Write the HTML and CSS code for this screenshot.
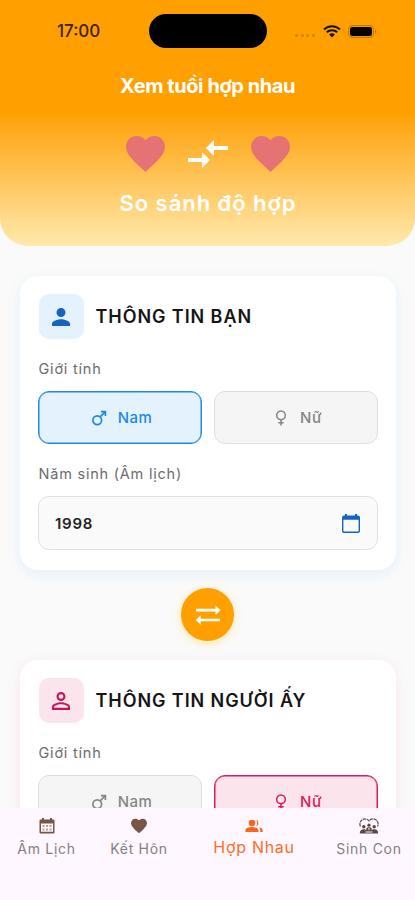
FILE: index.html
```html
<!DOCTYPE html>
<html lang="vi">
<head>
<meta charset="utf-8">
<meta name="viewport" content="width=device-width, initial-scale=1">
<title>Xem tuổi hợp nhau</title>
<link rel="stylesheet" href="styles.css">
</head>
<body>
<svg class="defs" width="0" height="0" aria-hidden="true">
  <symbol id="heart" viewBox="2 3 20 18.35"><path d="M12 21.35l-1.45-1.32C5.4 15.36 2 12.28 2 8.5 2 5.42 4.42 3 7.5 3c1.74 0 3.41.81 4.5 2.09C13.09 3.81 14.76 3 16.5 3 19.58 3 22 5.42 22 8.5c0 3.78-3.4 6.86-8.55 11.54L12 21.35z"/></symbol>
  <symbol id="male" viewBox="0 0 18 18"><path d="M10.6 7.4L16 2M11.2 1.800h5v5" fill="none" stroke="currentColor" stroke-width="1.900"/><circle cx="7" cy="11.500" r="4.900" fill="none" stroke="currentColor" stroke-width="1.900"/></symbol>
  <symbol id="female" viewBox="0 0 18 18"><circle cx="9" cy="6" r="4.900" fill="none" stroke="currentColor" stroke-width="1.700"/><path d="M9 10.900v6.600M6 14.300h6" fill="none" stroke="currentColor" stroke-width="1.700"/></symbol>
</svg>
<main class="screen">
  <header class="header">
    <div class="status">
      <span class="time">17:00</span>
      <span class="island"></span>
      <div class="signals">
        <span class="cell"><i></i><i></i><i></i><i></i></span>
        <svg class="wifi" viewBox="0 0 18 13"><path d="M1 4.5a11.5 11.5 0 0 1 16 0M3.8 7.3a7.4 7.4 0 0 1 10.4 0" fill="none" stroke="#171000" stroke-width="2"/><path d="M9 12.5L6.1 9.6a4.1 4.1 0 0 1 5.8 0z" fill="#171000"/></svg>
        <svg class="battery" viewBox="0 0 29 13"><rect x=".6" y=".6" width="24.8" height="11.8" rx="3.6" fill="none" stroke="#c07b08" stroke-width="1.1"/><rect x="2" y="2" width="22" height="9" rx="2.3" fill="#080500"/><path d="M27 4.2q2 2.2 0 4.4z" fill="#a96c08"/></svg>
      </div>
    </div>
    <h1 class="title">Xem tuổi hợp nhau</h1>
    <div class="hearts">
      <svg class="heart"><use href="#heart"/></svg>
      <svg class="compare" viewBox="2 5 20 14"><path d="M9.01 14H2v2h7.01v3L13 15l-3.99-4v3zm5.98-1v-3H22V8h-7.01V5L11 9l3.99 4z"/></svg>
      <svg class="heart"><use href="#heart"/></svg>
    </div>
    <p class="subtitle">So sánh độ hợp</p>
  </header>

  <section class="card card-self">
    <div class="card-head">
      <span class="avatar"><svg viewBox="4 4 16 16"><path d="M12 12c2.21 0 4-1.79 4-4s-1.79-4-4-4-4 1.79-4 4 1.79 4 4 4zm0 2c-2.67 0-8 1.34-8 4v2h16v-2c0-2.66-5.33-4-8-4z"/></svg></span>
      <h2>THÔNG TIN BẠN</h2>
    </div>
    <p class="label gender-label">Giới tính</p>
    <div class="options">
      <button class="option selected"><svg><use href="#male"/></svg><span>Nam</span></button>
      <button class="option"><svg><use href="#female"/></svg><span>Nữ</span></button>
    </div>
    <p class="label year-label">Năm sinh (Âm lịch)</p>
    <div class="field">
      <span>1998</span>
      <svg viewBox="0 0 18 19"><path d="M3 0h2v1.500h8V0h2v1.500h1a2 2 0 0 1 2 2V17a2 2 0 0 1-2 2H2a2 2 0 0 1-2-2V3.500a2 2 0 0 1 2-2h1zM1.400 5.700V16.800c0 .5.3.8.8.8h13.600c.5 0 .8-.3.8-.8V5.700z" fill-rule="evenodd"/></svg>
    </div>
  </section>

  <button class="swap" aria-label="Đổi"><svg viewBox="0 0 26 20"><path d="M1 5.200h20M5 15h20" stroke="#fff" stroke-width="2.700"/><path d="M20.500.4L25.500 5.200l-5 4.800zM5.700 10.200L.7 15l5 4.800z" fill="#fff"/></svg></button>

  <section class="card card-partner">
    <div class="card-head">
      <span class="avatar"><svg viewBox="4 4 16 16"><path d="M12 5.9a2.1 2.1 0 1 1 0 4.2 2.1 2.1 0 0 1 0-4.2m0 9c2.97 0 6.1 1.46 6.1 2.1v1.1H5.9V17c0-.64 3.13-2.1 6.1-2.1M12 4C9.79 4 8 5.79 8 8s1.79 4 4 4 4-1.79 4-4-1.79-4-4-4zm0 9c-2.67 0-8 1.34-8 4v3h16v-3c0-2.66-5.33-4-8-4z"/></svg></span>
      <h2>THÔNG TIN NGƯỜI ẤY</h2>
    </div>
    <p class="label gender-label">Giới tính</p>
    <div class="options">
      <button class="option"><svg><use href="#male"/></svg><span>Nam</span></button>
      <button class="option selected"><svg><use href="#female"/></svg><span>Nữ</span></button>
    </div>
  </section>

  <nav class="tabs">
    <a class="tab"><svg viewBox="0 0 16 16"><path d="M3 0h2v1.5h6V0h2v1.5h1.2c.8 0 1.3.5 1.3 1.3v11.4c0 .8-.5 1.3-1.3 1.3H1.8c-.8 0-1.3-.5-1.3-1.3V2.8c0-.8.5-1.3 1.3-1.3H3zM2 5.5v8.3h12V5.5z" fill-rule="evenodd"/><path d="M3.5 7h2v2h-2zM7 7h2v2H7zM10.5 7h2v2h-2zM3.5 10.5h2v2h-2zM7 10.5h2v2H7zM10.5 10.5h2v2h-2z" opacity=".55"/></svg><span>Âm Lịch</span></a>
    <a class="tab"><svg><use href="#heart"/></svg><span>Kết Hôn</span></a>
    <a class="tab active"><svg viewBox="0 0 18 14"><circle cx="7" cy="4" r="3.3"/><path d="M.5 13v-1.8C.5 9 3.800 8 7 8s6.500 1 6.500 3.200V13zM11 .8a3.300 3.300 0 0 1 0 6.400 5.300 5.300 0 0 0 0-6.400zM14 8.300c2 .4 3.700 1.300 3.700 2.900V13h-2.500v-1.800c0-1.200-.5-2.200-1.200-2.900z"/></svg><span>Hợp Nhau</span></a>
    <a class="tab family"><svg viewBox="0 0 20 16"><path d="M1.400 8.500C-.4 4 3 .8 6 .9c1.800 0 3.100.9 4 2 .9-1.100 2.200-2 4-2 3-.1 6.400 3.100 4.600 7.600" fill="none" stroke="currentColor" stroke-width="1.200" stroke-dasharray="3.500 .6"/><circle cx="4.800" cy="8.700" r="1.700"/><circle cx="15.200" cy="8.700" r="1.700"/><circle cx="10" cy="7.200" r="1.600"/><path d="M.8 15.500c0-3 1.700-4.200 4-4.200 1.300 0 2 .4 2.500 1.100V10.500c.5-.8 1.500-1.200 2.700-1.200s2.200.4 2.700 1.200v1.900c.5-.7 1.200-1.100 2.500-1.100 2.300 0 4 1.200 4 4.200z"/><path d="M6.500 14h7M10 9.800v2.400" stroke="#fdf6fd"/></svg><span>Sinh Con</span></a>
  </nav>
</main>
</body>
</html>
```

FILE: styles.css
```css
* { box-sizing: border-box; }
body { margin: 0; background: #fafafa; font-family: Inter, "Noto Sans", sans-serif; }
h1, h2, p { margin: 0; white-space: nowrap; }
button { font: inherit; margin: 0; padding: 0; }
svg { display: block; fill: currentColor; flex: none; }
.defs { position: absolute; }
.screen { position: relative; width: 415px; height: 900px; overflow: hidden; background: #fafafa; }

.header { height: 246px; border-radius: 0 0 28px 28px; background: linear-gradient(#ffa000 0, #ffa000 112px, #ffa716 125px, #ffe9ad 246px); color: #fff; display: flex; flex-direction: column; align-items: center; }
.status { width: 100%; height: 48px; padding-top: 14px; display: grid; grid-template-columns: 149px 118px 1fr; align-items: start; }
.time { margin-left: 57px; font-size: 17px; line-height: 35px; letter-spacing: 0; font-weight: 500; color: #382400; }
.island { height: 34px; border-radius: 17px; background: #000; }
.signals { display: flex; align-items: center; height: 34px; padding-left: 28px; }
.cell { display: flex; gap: 2.600px; width: 28px; padding-top: 9px; }
.cell i { width: 3px; height: 3px; border-radius: 50%; background: #cc8208; }
.wifi { width: 18px; height: 13px; }
.battery { width: 29px; height: 13px; margin-left: 7px; }
.title { margin-top: 25px; font-size: 20px; line-height: 27px; font-weight: 700; letter-spacing: -.42px; }
.hearts { display: flex; align-items: center; gap: 23px; margin-top: 36px; height: 36px; }
.heart { width: 39px; height: 36px; color: #e57373; }
.compare { width: 40px; height: 28px; }
.subtitle { margin-top: 16px; padding-left: 1px; font-size: 22px; line-height: 30px; font-weight: 600; letter-spacing: .95px; }

.card { margin: 30px 19px 0 20px; padding: 18px 18px 0; background: #fff; border-radius: 18px; }
.card-self { height: 294px; --accent: #1e88e5; --dark: #1565c0; --tint: #e3f2fd; box-shadow: 0 4px 14px rgba(33, 150, 243, .1); }
.card-partner { margin-top: 19px; height: 294px; --accent: #d81b60; --dark: #c2185b; --tint: #fce4ec; box-shadow: 0 4px 14px rgba(233, 30, 99, .1); }
.card-head { display: flex; align-items: flex-start; gap: 12px; height: 46px; padding-left: .5px; }
.avatar { width: 45px; height: 45px; display: grid; place-items: center; border-radius: 10px; background: var(--tint); color: var(--dark); }
.avatar svg { width: 18px; height: 18px; }
h2 { font-size: 18px; line-height: 45px; font-weight: 600; letter-spacing: .92px; color: #151515; }
.label { padding-left: .5px; font-size: 14.500px; line-height: 20px; letter-spacing: .78px; color: #6c6c6c; font-weight: 400; }
.gender-label { margin-top: 19px; }
.options { display: grid; grid-template-columns: 1fr 1fr; gap: 12px; margin-top: 12px; }
.option { height: 53px; padding-left: 3px; border: 1px solid #dedede; border-radius: 11px; background: #f5f5f5; color: #858585; display: flex; align-items: center; justify-content: center; gap: 11px; font-size: 15px; font-weight: 500; letter-spacing: .5px; }
.option svg { width: 16px; height: 16px; }
.option.selected { border-color: var(--accent); box-shadow: inset 0 0 0 .5px var(--accent); background: var(--tint); color: var(--accent); }
.year-label { margin-top: 20px; }
.field { display: flex; align-items: center; justify-content: space-between; height: 54px; margin-top: 12px; padding: 0 17px 0 16px; border: 1px solid #e0e0e0; border-radius: 11px; background: #fafafa; font-size: 15px; font-weight: 600; letter-spacing: .75px; color: #222; }
.field svg { width: 18px; height: 19px; color: #1565c0; }
.swap { display: grid; place-items: center; width: 53px; height: 53px; margin: 18px auto 0; border: 0; border-radius: 50%; background: #ffa000; box-shadow: 0 2px 10px rgba(255, 193, 7, .35); }
.swap svg { width: 26px; height: 20px; }

.tabs { position: absolute; left: 0; right: 0; bottom: 0; height: 92px; padding-top: 10px; display: grid; grid-template-columns: 93px 92px 138px 92px; background: #fef7ff; }
.tab { display: flex; flex-direction: column; align-items: center; color: #858080; font-size: 14px; line-height: 20px; letter-spacing: .7px; white-space: nowrap; }
.tab svg { width: 16px; height: 16px; margin-bottom: 5px; color: #795548; }
.tab.active { color: #ff6d24; font-size: 16px; }
.tab.active svg { width: 18px; height: 14px; margin: 1px 0 4px; color: #f4651e; }
.family svg { width: 20px; color: #5d4742; }
```
